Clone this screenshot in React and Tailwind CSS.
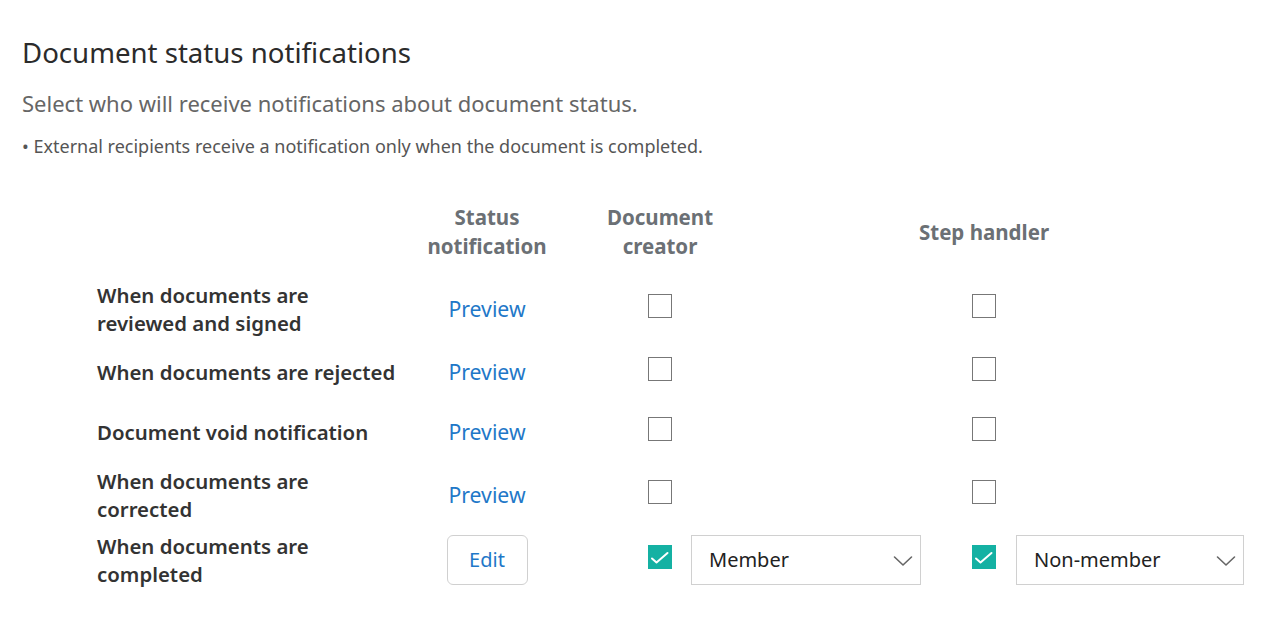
const rows = [
  { label: ["When documents are", "reviewed and signed"], h: "h-[63px]" },
  { label: ["When documents are rejected"], h: "h-[63px]" },
  { label: ["Document void notification"], h: "h-[57px]" },
  { label: ["When documents are", "corrected"], h: "h-[69px]" },
];

function Box({ checked }) {
  if (checked) {
    return (
      <span className="mb-[6px] flex h-6 w-6 shrink-0 items-center justify-center bg-[#14b1a3]">
        <svg width="24" height="24" viewBox="0 0 24 24" fill="none">
          <path d="M4 13.5 L8.5 17.5 L19.5 8" stroke="#fff" strokeWidth="2" strokeLinecap="round" strokeLinejoin="round" />
        </svg>
      </span>
    );
  }
  return <span className="mb-[6px] block h-6 w-6 shrink-0 border border-[#777] bg-white" />;
}

function Select({ value, w }) {
  return (
    <div className={`flex h-[50px] ${w} shrink-0 items-center justify-between border border-[#d0d0d0] bg-white pl-[17px] pr-[6px] text-[20px] text-[#222]`}>
      <span>{value}</span>
      <svg width="20" height="12" viewBox="0 0 20 12" fill="none" className="mr-[1px] mt-[2px]">
        <path d="M1.5 2 L10 10 L18.5 2" stroke="#666" strokeWidth="1.6" strokeLinecap="round" strokeLinejoin="round" />
      </svg>
    </div>
  );
}

export default function App() {
  return (
    <div className="min-h-[622px] bg-white px-[22px] pt-[34px] font-['Noto_Sans','Lato',sans-serif]">
      <h1 className="text-[27.6px] leading-[36px] text-[#2b2b2b]">Document status notifications</h1>
      <p className="mt-[19px] text-[22px] leading-[28px] text-[#666]">
        Select who will receive notifications about document status.
      </p>
      <p className="mt-[18px] text-[18px] leading-[22px] text-[#555]">• External recipients receive a notification only when the document is completed.</p>

      <div className="mt-[46px] pl-[75px]">
        {/* header */}
        <div className="flex h-[74px] items-start text-[20.5px] font-bold leading-[29px] text-[#6b7075]">
          <div className="w-[315px] shrink-0" />
          <div className="w-[150px] shrink-0 text-center">
            Status
            <br />
            notification
          </div>
          <div className="w-[196px] shrink-0 text-center">
            Document
            <br />
            creator
          </div>
          <div className="w-[126px] shrink-0" />
          <div className="w-[200px] shrink-0 pt-[15px] text-center">Step handler</div>
        </div>

        {rows.map((r, i) => (
          <div key={i} className={`flex ${r.h} items-center`}>
            <div className="w-[315px] shrink-0 text-[20.4px] font-semibold leading-[28px] text-[#333]">
              {r.label.map((l) => (
                <div key={l}>{l}</div>
              ))}
            </div>
            <div className="w-[150px] shrink-0 text-center text-[21.2px] text-[#1f78c8]">Preview</div>
            <div className="flex w-[196px] shrink-0 justify-center">
              <Box />
            </div>
            <div className="w-[126px] shrink-0" />
            <div className="flex w-[200px] shrink-0 justify-center">
              <Box />
            </div>
          </div>
        ))}

        <div className="flex h-[61px] items-center">
          <div className="w-[315px] shrink-0 text-[20.4px] font-semibold leading-[28px] text-[#333]">
            <div>When documents are</div>
            <div>completed</div>
          </div>
          <div className="flex w-[150px] shrink-0 justify-center">
            <button className="h-[50px] w-[81px] rounded-md border border-[#d0d0d0] bg-white text-[20px] text-[#1f78c8]">
              Edit
            </button>
          </div>
          <div className="flex w-[322px] shrink-0 items-center gap-[19px] pl-[86px]">
            <Box checked />
            <Select value="Member" w="w-[230px]" />
          </div>
          <div className="flex shrink-0 items-center gap-[20px] pl-[88px]">
            <Box checked />
            <Select value="Non-member" w="w-[228px]" />
          </div>
        </div>
      </div>
    </div>
  );
}
